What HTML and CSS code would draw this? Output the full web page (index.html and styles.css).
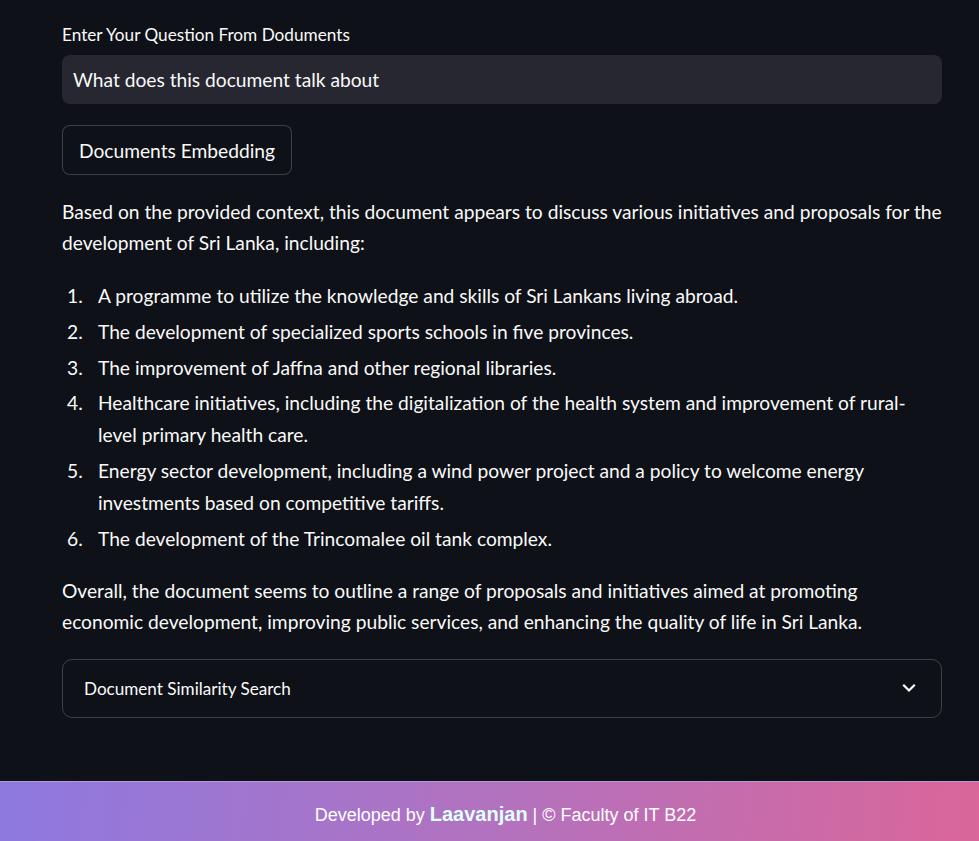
FILE: index.html
```html
<!DOCTYPE html>
<html lang="en">
<head>
<meta charset="utf-8">
<title>Document Q&amp;A</title>
<link rel="stylesheet" href="styles.css">
</head>
<body>
<div class="page">
  <main class="main">
    <label class="label" for="q">Enter Your Question From Doduments</label>
    <div class="input-box" id="q">What does this document talk about</div>
    <button class="btn" type="button">Documents Embedding</button>
    <p class="para">Based on the provided context, this document appears to discuss various initiatives and proposals for the development of Sri Lanka, including:</p>
    <ol class="list">
      <li>A programme to utilize the knowledge and skills of Sri Lankans living abroad.</li>
      <li>The development of specialized sports schools in five provinces.</li>
      <li>The improvement of Jaffna and other regional libraries.</li>
      <li>Healthcare initiatives, including the digitalization of the health system and improvement of rural-level primary health care.</li>
      <li>Energy sector development, including a wind power project and a policy to welcome energy investments based on competitive tariffs.</li>
      <li>The development of the Trincomalee oil tank complex.</li>
    </ol>
    <p class="para para-last">Overall, the document seems to outline a range of proposals and initiatives aimed at promoting economic development, improving public services, and enhancing the quality of life in Sri Lanka.</p>
    <div class="expander">
      <span class="exp-title">Document Similarity Search</span>
      <svg class="chev" width="14" height="10" viewBox="0 0 14 10"><path d="M2 2.5 L7 7.5 L12 2.5" fill="none" stroke="#fafafa" stroke-width="2.2" stroke-linecap="square"/></svg>
    </div>
  </main>
  <footer class="footer">
    <span>Developed by <b class="name">Laavanjan</b> | © Faculty of IT B22</span>
  </footer>
</div>
</body>
</html>
```

FILE: styles.css
```css
html, body {
  margin: 0;
  padding: 0;
  background: #0e1117;
}
body {
  color: #fafafa;
  font-family: "Lato", "Liberation Sans", sans-serif;
}
.page {
  min-height: 100vh;
  display: flex;
  flex-direction: column;
}
.main {
  width: 880px;
  margin-left: 62px;
  padding-top: 23px;
  display: flex;
  flex-direction: column;
  align-items: flex-start;
}
.label {
  font-size: 17.2px;
  line-height: 24px;
  margin-bottom: 8px;
}
.input-box {
  box-sizing: border-box;
  width: 100%;
  height: 49px;
  background: #262730;
  border-radius: 8px;
  padding: 0 11px;
  display: flex;
  align-items: center;
  font-size: 19.2px;
}
.btn {
  margin-top: 21px;
  height: 50px;
  padding: 0 16px;
  background: #0e1117;
  color: #fafafa;
  border: 1px solid rgba(250, 250, 250, 0.2);
  border-radius: 8px;
  font-family: inherit;
  font-size: 19.2px;
}
.para {
  margin: 21px 0 0;
  font-size: 19.2px;
  line-height: 31px;
}
.list {
  margin: 22px 0 0;
  padding-left: 36px;
  font-size: 19.2px;
  line-height: 32px;
  display: flex;
  flex-direction: column;
  gap: 3.8px;
  list-style: none;
  counter-reset: item;
}
.list li {
  counter-increment: item;
}
.list li::before {
  content: counter(item) ".";
  display: inline-block;
  box-sizing: border-box;
  width: 36px;
  margin-left: -36px;
  padding-left: 5px;
}
.para-last {
  margin-top: 20px;
}
.expander {
  box-sizing: border-box;
  margin-top: 22px;
  width: 100%;
  height: 59px;
  border: 1px solid rgba(250, 250, 250, 0.2);
  border-radius: 10px;
  padding: 0 25px 0 21px;
  display: flex;
  align-items: center;
  justify-content: space-between;
}
.exp-title {
  font-size: 17.1px;
}
.chev {
  display: block;
}
.footer {
  margin-top: auto;
  height: 60px;
  box-sizing: border-box;
  border-top: 1px solid #b49ad6;
  background: linear-gradient(95deg, #8d79e0 0%, #b272bf 50%, #da669a 100%);
  display: flex;
  align-items: center;
  justify-content: center;
  font-family: "Liberation Sans", Arial, sans-serif;
  font-size: 18px;
  color: #ffffff;
  padding: 6px 0 0 32px;
}
.name {
  font-size: 20px;
  color: #e0ffff;
}
```
